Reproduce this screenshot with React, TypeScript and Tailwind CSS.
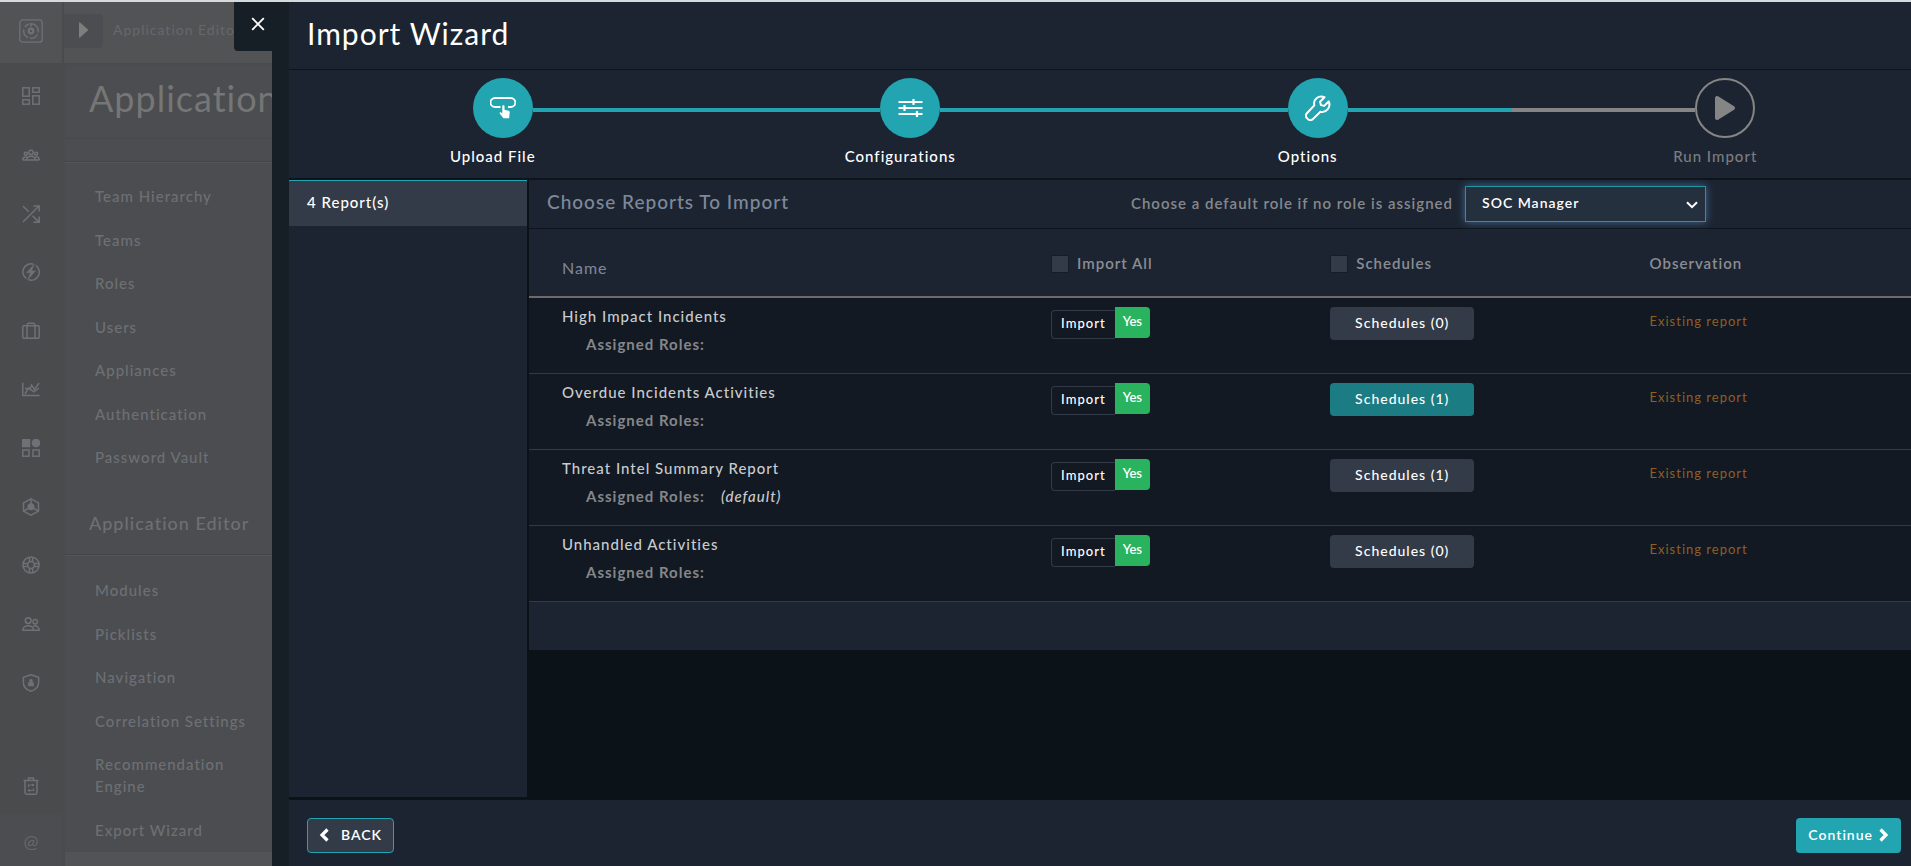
import { useState } from "react";

type Report = {
  name: string;
  role?: string;
  schedules: number;
  active?: boolean;
};

const settingsLinks = ["Team Hierarchy", "Teams", "Roles", "Users", "Appliances", "Authentication", "Password Vault"];

const editorLinks = ["Modules", "Picklists", "Navigation", "Correlation Settings", "Recommendation Engine", "Export Wizard"];

const reports: Report[] = [
  { name: "High Impact Incidents", schedules: 0 },
  { name: "Overdue Incidents Activities", schedules: 1, active: true },
  { name: "Threat Intel Summary Report", role: "(default)", schedules: 1 },
  { name: "Unhandled Activities", schedules: 0 },
];

const navIcons = [
  {
    label: "Dashboard",
    art: (
      <>
        <rect x="0.8" y="0.8" width="6.4" height="8.4" />
        <rect x="10.8" y="0.8" width="6.4" height="4.4" />
        <rect x="0.8" y="12.8" width="6.4" height="4.4" />
        <rect x="10.8" y="8.8" width="6.4" height="8.4" />
      </>
    ),
  },
  {
    label: "Queues",
    art: (
      <>
        <circle cx="9" cy="6.4" r="2.2" />
        <circle cx="3.8" cy="7.8" r="1.5" />
        <circle cx="14.2" cy="7.8" r="1.5" />
        <path d="M4.8 14c0-5 8.4-5 8.4 0zM.7 14c0-2.400 1.600-3.500 4-3M17.300 14c0-2.400-1.600-3.500-4-3M.7 14h16.600" />
      </>
    ),
  },
  {
    label: "Incident Response",
    art: <path d="M1 17 17 1M11.500 .9H17.200V6.500M1 1.200l5.800 5.600M10.500 10.800l6.500 6.300M11.500 17.200h5.700v-5.700" />,
  },
  {
    label: "Automation",
    art: (
      <>
        <path d="M11.400 1.200A8.100 8.100 0 0 0 4.400 15.600M6.600 16.800A8.100 8.100 0 0 0 13.700 2.400" />
        <path d="M12.500 1 4.500 9.800h4L5.500 17l8.200-9.200H9.500z" fill="currentColor" strokeWidth="0.400" />
      </>
    ),
  },
  {
    label: "Resources",
    art: (
      <>
        <rect x="0.8" y="3.800" width="16.400" height="12.400" rx="1" />
        <path d="M5 16.200V3.500Q5 1.300 7 1.300h4q2 0 2 2.200v12.700" />
      </>
    ),
  },
  {
    label: "Reports",
    art: <path d="M.8 2.500v13H17.500M3 14 6.500 8l2 .2L9.500 5l3 4.500L17 3M3 8.500h4l5 3.300 5-3.800" />,
  },
  {
    label: "Widgets",
    art: (
      <>
        <rect x="0.500" y="0.500" width="7" height="7" fill="currentColor" />
        <circle cx="14" cy="4" r="3.600" fill="currentColor" />
        <rect x="0.8" y="11" width="6.200" height="6.200" />
        <rect x="11" y="11" width="6.200" height="6.200" />
      </>
    ),
  },
  {
    label: "Content Hub",
    art: (
      <>
        <path d="M9 .8 16.500 4.900v8.200L9 17.200 1.500 13.100V4.900z" />
        <circle cx="9" cy="8.800" r="2.800" fill="currentColor" />
        <path d="M9 1v6M2 13l4.500-2.800M16 13l-4.500-2.800" />
      </>
    ),
  },
  {
    label: "Help",
    art: (
      <>
        <circle cx="9" cy="9" r="8.100" />
        <circle cx="9" cy="9" r="3.400" />
        <path d="M7.400 1v4.800M10.600 1v4.800M7.400 12.200V17M10.600 12.200V17M1 7.400h4.800M1 10.600h4.800M12.200 7.400H17M12.200 10.600H17" />
      </>
    ),
  },
  {
    label: "Users",
    art: (
      <>
        <circle cx="6.200" cy="5.600" r="2.900" />
        <circle cx="13.200" cy="6.800" r="2.200" />
        <path d="M.8 15.200c0-6 10.800-6 10.800 0zM11 11.200c3.400-1.100 6.200.6 6.200 4h-5.600" />
      </>
    ),
  },
  {
    label: "Threat Intel",
    art: (
      <>
        <path d="M9 .8 16.600 3.400v5c0 4.200-3 7.400-7.600 8.800-4.600-1.400-7.600-4.600-7.600-8.800v-5z" />
        <circle cx="9" cy="6.800" r="1.800" fill="currentColor" strokeWidth="0" />
        <path d="M6.500 8.300h5l.3 3.700h-5.600z" fill="currentColor" strokeWidth="0.500" />
      </>
    ),
  },
];

function NavIcon({ label, children }: { label: string; children: React.ReactNode }) {
  return (
    <a href="#" aria-label={label} className="block text-[#6e7276]">
      <svg width="18" height="18" viewBox="0 0 18 18" fill="none" stroke="currentColor" strokeWidth="1.500">
        {children}
      </svg>
    </a>
  );
}

const steps = [
  {
    label: "Upload File",
    before: "bg-transparent",
    after: "bg-[#22a5b1]",
    circle: "bg-[#22a5b1] text-white",
    text: "text-white",
    icon: (
      <svg width="26" height="22" viewBox="0 0 26 22" fill="none" stroke="currentColor" strokeWidth="1.800">
        <path d="M10.500 10H5A4.400 4.400 0 0 1 5 1h15.800a4.400 4.400 0 0 1 0 9H18" />
        <path
          d="M12.300 9.200c0-1.300 2.200-1.300 2.200 0v3.600l4 .9c1 .3 1.300.9 1.200 1.900l-.6 5.700h-5.600l-3.600-4.600c-.8-1.200.4-2 1.300-1.200l1.100 1z"
          fill="currentColor"
          stroke="none"
        />
      </svg>
    ),
  },
  {
    label: "Configurations",
    before: "bg-[#22a5b1]",
    after: "bg-[#22a5b1]",
    circle: "bg-[#22a5b1] text-white",
    text: "text-white",
    icon: (
      <svg width="25" height="20" viewBox="0 0 25 20" fill="none" stroke="currentColor" strokeWidth="1.800">
        <path d="M.5 4H24.500M.5 10H24.500M.5 16H24.500" />
        <path d="M15.500 1v6M6.500 7v6M19 13v6" strokeWidth="2.200" />
      </svg>
    ),
  },
  {
    label: "Options",
    before: "bg-[#22a5b1]",
    after: "bg-[#22a5b1]",
    circle: "bg-[#22a5b1] text-white",
    text: "text-white",
    icon: (
      <svg width="26" height="26" viewBox="0 0 26 26" fill="none" stroke="currentColor" strokeWidth="2" strokeLinejoin="round">
        <path d="M19.500 2.200C14 -.3 7.800 4.200 9.300 10.400L1.900 18.200c-3.200 3.400 2.500 9.200 6 5.900l7.500-7.400c6.200 1.500 10.800-4.800 8.300-10.200l-4.500 4.400-3.300-.8-.8-3.400z" />
      </svg>
    ),
  },
  {
    label: "Run Import",
    before: "bg-[#858585]",
    after: "bg-transparent",
    circle: "border-2 border-[#858585] text-[#858585]",
    text: "text-[#7a7d80]",
    icon: (
      <svg width="22" height="26" viewBox="0 0 22 26" fill="currentColor" stroke="currentColor" strokeWidth="4" strokeLinejoin="round">
        <path d="M3 3v20l16-10z" />
      </svg>
    ),
  },
];

function Stepper() {
  return (
    <ol className="-mr-2 grid h-[108px] grid-cols-4 pt-2">
      {steps.map((step) => (
        <li key={step.label} className="flex flex-col items-center">
          <div className="flex w-full items-center">
            <div className={`mt-1 h-1 flex-1 pl-5 ${step.before}`} />
            <div className={`flex h-15 w-15 items-center justify-center rounded-full ${step.circle}`}>{step.icon}</div>
            <div className={`mt-1 h-1 flex-1 ${step.after}`} />
          </div>
          <span className={`mt-[7px] text-[15px] leading-[22px] font-medium ${step.text}`}>{step.label}</span>
        </li>
      ))}
    </ol>
  );
}

function Sidebar() {
  return (
    <div className="flex w-[272px] shrink-0 flex-col overflow-hidden bg-[#525354]">
      <div className="flex h-[61px] shrink-0 items-stretch">
        <div className="flex w-16 shrink-0 items-center justify-center border-r-2 border-[#4a4b4d] pb-1 text-[#6e7276]">
          <svg width="24" height="24" viewBox="0 0 24 24" fill="none" stroke="currentColor">
            <rect x="0.800" y="0.800" width="22.400" height="22.400" rx="3" strokeWidth="1.300" />
            <circle cx="12" cy="12" r="2.300" strokeWidth="2.200" />
            <path d="M10 5a7.300 7.300 0 0 0-4 3.200M4.800 10.500a7.300 7.300 0 0 0 4.300 8M11 19.200a7.300 7.300 0 0 0 7.500-3.700M19.200 13.500a7.300 7.300 0 0 0-7.200-8.800v3" strokeWidth="1.500" />
          </svg>
        </div>
        <div className="flex min-w-0 items-center gap-[10px] pb-1">
          <button type="button" aria-label="Expand" className="flex h-[34px] w-[39px] shrink-0 items-center justify-center rounded-r-sm bg-[#4c4d50] pb-0.5 text-[#7d7e7e]">
            <svg width="10" height="16" viewBox="0 0 10 16" fill="currentColor">
              <path d="M0 1Q0 0 1 .5L9.500 8 1 15.500Q0 16 0 15z" />
            </svg>
          </button>
          <span className="truncate pb-0.5 text-sm text-[#65686c]">Application Editor</span>
        </div>
      </div>

      <div className="flex min-h-0 flex-1">
        <nav className="flex w-[65px] shrink-0 flex-col bg-[#4a4b4c]">
          <div className="flex h-[649px] flex-col items-center justify-around pt-1 pr-[3px]">
            {navIcons.map((item) => (
              <NavIcon key={item.label} label={item.label}>
                {item.art}
              </NavIcon>
            ))}
          </div>
          <div className="flex flex-1 flex-col items-center justify-end pr-[3px] pb-5">
            <NavIcon label="Recycle Bin">
              <path d="M1.500 3.500h15M6.500 3V1h5v2M3 4v11.500q0 1.700 1.700 1.700h8.600q1.700 0 1.700-1.700V4" strokeWidth="1.500" />
              <path d="M6.500 10V8h5M11.500 11.500v2h-5M10.300 6.800 11.700 8l-1.400 1.200M7.700 12.300 6.300 13.500l1.400 1.200" strokeWidth="1.100" />
            </NavIcon>
          </div>
          <div className="mr-[3px] flex h-[51px] items-center justify-center bg-[#4c4d50] text-lg tracking-normal text-[#66686a]">@</div>
        </nav>

        <div className="flex min-w-0 flex-1 flex-col border-t-2 border-[#4a4b4d] bg-[#4c4d50] text-[#6c7075]">
          <h1 className="h-[74px] shrink-0 border-b-2 border-[#484a4c] pt-[11px] pl-6 text-4xl leading-[44px] text-[#757676]">Application</h1>
          <div className="h-[23px] shrink-0 border-b border-[#434547]" />
          <ul className="flex h-[306px] shrink-0 flex-col justify-between border-t border-[#535558] pt-[22px] pl-[30px] text-[15px] leading-[22px] font-medium">
            {settingsLinks.map((link) => (
              <li key={link}>
                <a href="#">{link}</a>
              </li>
            ))}
          </ul>
          <h2 className="h-[87px] shrink-0 border-b border-[#434547] pt-[43px] pl-6 text-lg leading-6 font-medium">Application Editor</h2>
          <ul className="flex h-[286px] shrink-0 flex-col justify-between border-t border-[#535558] pt-[23px] pl-[30px] text-[15px] leading-[22px] font-medium">
            {editorLinks.map((link) => (
              <li key={link}>
                <a href="#">{link}</a>
              </li>
            ))}
          </ul>
          <div className="mt-auto h-[14px] bg-[#525354]" />
        </div>
      </div>
    </div>
  );
}

function ReportsTable() {
  const [importAll, setImportAll] = useState(false);
  const [allSchedules, setAllSchedules] = useState(false);
  const checkbox = "h-[18px] w-[18px] appearance-none border border-[#171d28] bg-[#343b48] checked:bg-[#22a5b1]";

  return (
    <table className="w-full table-fixed border-separate border-spacing-0 text-left">
      <thead>
        <tr className="h-[69px] bg-[#1d2431] text-[15px] text-[#8a8e94]">
          <th className="w-[37.2%] border-b-2 border-[#6b6b6b] pt-2.5 pl-[33px] text-base font-normal text-[#7d899b]">Name</th>
          <th className="w-[20.2%] border-b-2 border-[#6b6b6b] pt-0.5 pl-2 font-semibold">
            <label className="flex items-center gap-2">
              <input type="checkbox" className={checkbox} checked={importAll} onChange={(e) => setImportAll(e.target.checked)} />
              Import All
            </label>
          </th>
          <th className="w-[23.1%] border-b-2 border-[#6b6b6b] pt-0.5 pl-2 font-semibold">
            <label className="flex items-center gap-2">
              <input type="checkbox" className={checkbox} checked={allSchedules} onChange={(e) => setAllSchedules(e.target.checked)} />
              Schedules
            </label>
          </th>
          <th className="border-b-2 border-[#6b6b6b] pt-0.5 pl-2 font-semibold">Observation</th>
        </tr>
      </thead>
      <tbody>
        {reports.map((report) => (
          <tr key={report.name} className="h-[76px] bg-[#121922] align-top">
            <td className="border-b border-[#333a47] pt-[7px] pl-[33px] text-[15px] leading-[22px] text-[#c9cbce]">
              <div className="font-medium">{report.name}</div>
              <div className="mt-1.5 flex gap-4 pl-6">
                <span className="font-bold text-[#85878a]">Assigned Roles:</span>
                {report.role && <em className="font-medium">{report.role}</em>}
              </div>
            </td>
            <td className="border-b border-[#333a47] pt-[9px] pl-2">
              <button type="button" className="flex items-start text-white">
                <span className="mt-[3px] h-[29px] rounded-l-sm border border-r-0 border-[#333a47] px-[9px] text-[13px] leading-[25px] font-medium">Import</span>
                <span className="h-[31px] rounded-r-sm bg-[#29b35f] px-2 text-[13px] leading-[29px] font-semibold tracking-normal">Yes</span>
              </button>
            </td>
            <td className="border-b border-[#333a47] pt-[9px] pl-2">
              <button type="button" className={`h-[33px] w-36 rounded-sm pb-0.5 text-sm font-medium text-white ${report.active ? "bg-[#1b7c84]" : "bg-[#343b48]"}`}>
                Schedules ({report.schedules})
              </button>
            </td>
            <td className="border-b border-[#333a47] pt-3 pl-2 text-[13px] leading-[22px] text-[#8f5f24]">Existing report</td>
          </tr>
        ))}
      </tbody>
      <tfoot>
        <tr className="h-12 bg-[#1d2431]">
          <td colSpan={4} />
        </tr>
      </tfoot>
    </table>
  );
}

export default function App() {
  const [role, setRole] = useState("SOC Manager");

  return (
    <div className="flex h-screen flex-col overflow-hidden border-t-2 border-[#d5dadd] bg-[#0b1218] font-['Lato',sans-serif] tracking-[1px]">
      <div className="relative flex min-h-0 flex-1">
        <Sidebar />

        {/* Close tab hangs off the drawer edge */}
        <button type="button" aria-label="Close" className="absolute top-0 left-[234px] flex h-[49px] w-[38px] items-center justify-center rounded-bl-sm bg-[#161e26] text-white">
          <svg width="14" height="14" viewBox="0 0 14 14" stroke="currentColor" strokeWidth="1.900" className="mb-1.5 ml-2.5">
            <path d="M1.200 1.200 12.800 12.800M12.800 1.200 1.200 12.800" />
          </svg>
        </button>

        <div className="w-[17px] shrink-0 bg-[#161e26]" />

        <main className="flex min-w-0 flex-1 flex-col overflow-hidden">
          <header className="flex h-[68px] shrink-0 items-center border-b border-[#0d141b] bg-[#1d2431] pb-1.5 pl-[18px]">
            <h1 className="text-3xl text-white">Import Wizard</h1>
          </header>
          <div className="shrink-0 border-b-2 border-[#0d141b] bg-[#1d2431]">
            <Stepper />
          </div>

          <div className="flex min-h-0 flex-1 gap-0.5">
            <aside className="mb-[3px] w-[238px] shrink-0 bg-[#1d2431]">
              <button type="button" className="block h-[46px] w-full border-t border-[#22a5b1] bg-[#343b48] pb-0.5 pl-[18px] text-left text-[15px] font-medium text-white">
                4 Report(s)
              </button>
            </aside>

            <section className="min-w-0 flex-1">
              <div className="flex h-[49px] items-center border-b border-[#0d141b] bg-[#1d2431] pr-[205px] pl-[18px]">
                <h2 className="pb-1 text-[19px] font-medium text-[#7d899b]">Choose Reports To Import</h2>
                <label htmlFor="role" className="ml-auto pb-0.5 text-[15px] font-semibold text-[#85898e]">
                  Choose a default role if no role is assigned
                </label>
                <div className="relative ml-3 text-white">
                  <select
                    id="role"
                    value={role}
                    onChange={(e) => setRole(e.target.value)}
                    className="block h-9 w-[241px] appearance-none border border-[#1f97a2] bg-[#25303f] pb-0.5 pl-4 text-sm font-semibold shadow-[0_0_8px_#3f6c96] outline-none"
                  >
                    <option>SOC Manager</option>
                  </select>
                  <svg width="12" height="8" viewBox="0 0 12 8" fill="none" stroke="currentColor" strokeWidth="2" className="pointer-events-none absolute top-[15px] right-2">
                    <path d="M1 1.200 6 6.200 11 1.200" />
                  </svg>
                </div>
              </div>
              <ReportsTable />
            </section>
          </div>

          <footer className="flex h-[66px] shrink-0 items-center justify-between bg-[#1d2431] pt-1 pr-2.5 pl-[18px] text-white">
            <button type="button" className="flex h-[35px] items-center gap-3 rounded-sm border border-[#22a5b1] bg-[#343b48] px-[11px] text-sm font-semibold">
              <svg width="10" height="14" viewBox="0 0 10 14" fill="none" stroke="currentColor" strokeWidth="3.200">
                <path d="M8.500 1.500 3 7 8.500 12.500" />
              </svg>
              BACK
            </button>
            <button type="button" className="flex h-[35px] items-center gap-1.5 rounded-sm bg-[#22a5b1] px-3 text-sm font-semibold">
              Continue
              <svg width="10" height="14" viewBox="0 0 10 14" fill="none" stroke="currentColor" strokeWidth="3.200">
                <path d="M1.500 1.500 7 7 1.500 12.500" />
              </svg>
            </button>
          </footer>
        </main>
      </div>
    </div>
  );
}
